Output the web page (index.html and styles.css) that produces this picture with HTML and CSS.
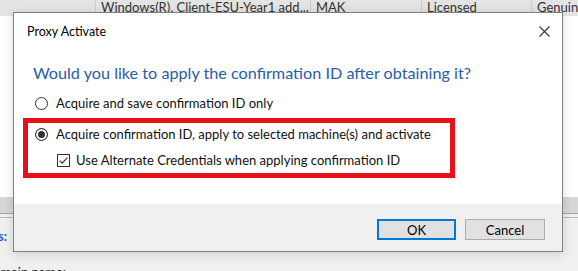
FILE: index.html
```html
<!DOCTYPE html>
<html lang="en">
<head>
    <meta charset="UTF-8">
    <title>Proxy Activate</title>
    <link rel="stylesheet" href="styles.css">
</head>
<body>
    <!-- the management console behind the dialog -->
    <div class="app">
        <div class="list-head">
            <div class="col c0"></div>
            <div class="col c1">Windows(R), Client-ESU-Year1 add...</div>
            <div class="col c2">MAK</div>
            <div class="col c3">Licensed</div>
            <div class="col c4">Genuine</div>
        </div>
        <div class="list-body"></div>
        <div class="list-sel"></div>
        <div class="list-foot"></div>
        <div class="label-clip details"><span>Details:</span></div>
        <div class="label-clip domain"><span>Domain name:</span></div>
    </div>

    <div class="dialog">
        <div class="title-bar">
            <span class="title">Proxy Activate</span>
            <svg class="close" width="11" height="11" viewBox="0 0 11 11">
                <path d="M0.5 0.5 L10.5 10.5 M10.5 0.5 L0.5 10.5" stroke="#333" stroke-width="1.1" fill="none"/>
            </svg>
        </div>
        <div class="content">
            <h2 class="heading">Would you like to apply the confirmation ID after obtaining it?</h2>
            <label class="option first">
                <input type="radio" name="mode" class="radio">
                <span>Acquire and save confirmation ID only</span>
            </label>
            <div class="highlight">
                <label class="option">
                    <input type="radio" name="mode" class="radio" checked>
                    <span>Acquire confirmation ID, apply to selected machine(s) and activate</span>
                </label>
                <label class="option sub">
                    <svg class="check" width="13" height="13" viewBox="0 0 13 13">
                        <rect x="0.5" y="0.5" width="12" height="12" fill="#fff" stroke="#333"/>
                        <path d="M2.6 6.6 L5.2 9.2 L10.4 3.6" stroke="#333" stroke-width="1.2" fill="none"/>
                    </svg>
                    <span>Use Alternate Credentials when applying confirmation ID</span>
                </label>
            </div>
        </div>
        <div class="footer">
            <button class="btn default">OK</button>
            <button class="btn">Cancel</button>
        </div>
    </div>
</body>
</html>
```

FILE: styles.css
```css
* {
    box-sizing: border-box;
}

body {
    margin: 0;
    width: 578px;
    height: 271px;
    overflow: hidden;
    position: relative;
    background-color: #f0f0f0;
    font-family: Lato, "Noto Sans", sans-serif;
    font-size: 12px;
    color: #1a1a1a;
}

/* background window */
.list-head {
    display: flex;
    height: 16px;
    background-color: #e4e4e4;
    font-size: 13px;
    line-height: 14px;
}

.col {
    border-right: 1px solid #cdcdcd;
    padding-left: 5px;
    white-space: nowrap;
    overflow: hidden;
    color: #333;
}

.c0 { width: 96px; }
.c1 { width: 215px; }
.c2 { width: 111px; }
.c3 { width: 110px; }
.c4 { flex: 1; border-right: none; }

.list-body {
    height: 181px;
    background-color: #fff;
}

.list-sel {
    height: 17px;
    background-color: #d7d7d7;
    border-bottom: 1px solid #a5a5a5;
}

.list-foot {
    height: 4px;
    border-bottom: 1px solid #b8b8b8;
}

.label-clip {
    display: flex;
    justify-content: flex-end;
    overflow: hidden;
    white-space: nowrap;
}

.details {
    width: 7px;
    margin-top: 10px;
    color: #1f5fc8;
    font-weight: bold;
    font-size: 13px;
}

.domain {
    width: 66px;
    margin-top: 20px;
    font-size: 13px;
    color: #222;
}

/* dialog */
.dialog {
    position: absolute;
    left: 13px;
    top: 12px;
    width: 550px;
    height: 240px;
    background-color: #fff;
    border: 1px solid #808080;
    box-shadow: 0 2px 10px rgba(0, 0, 0, 0.15);
    display: flex;
    flex-direction: column;
}

.title-bar {
    height: 36px;
    display: flex;
    align-items: center;
    justify-content: space-between;
    padding: 0 12px 0 13px;
    font-size: 12.5px;
    color: #000;
}

.content {
    height: 155px;
    padding: 13px 0 0 9px;
}

.heading {
    margin: 0;
    padding-left: 10px;
    font-size: 16.2px;
    line-height: 22px;
    font-weight: normal;
    color: #2a5cab;
}

.option {
    display: flex;
    align-items: center;
    height: 20px;
    gap: 8px;
    font-size: 13px;
    color: #111;
    white-space: nowrap;
}

.option.first {
    margin-top: 9px;
    padding-left: 12px;
}

.radio {
    appearance: none;
    margin: 0;
    width: 13px;
    height: 13px;
    border: 1px solid #333;
    border-radius: 50%;
    background-color: #fff;
}

.radio:checked {
    background-color: #333;
    box-shadow: inset 0 0 0 2px #fff;
}

.highlight {
    width: 432px;
    margin-top: 5px;
    border: 5px solid #e5121b;
    padding: 1px 0 3px 7px;
    display: flex;
    flex-direction: column;
    gap: 6px;
}

.option.sub {
    padding-left: 22px;
    gap: 6px;
}

.footer {
    flex: 1;
    background-color: #f0f0f0;
    display: flex;
    justify-content: flex-end;
    align-items: flex-start;
    gap: 9px;
    padding: 15px 17px 0 0;
}

.btn {
    width: 80px;
    height: 21px;
    background-color: #e1e1e1;
    border: 1px solid #adadad;
    font-family: inherit;
    font-size: 13px;
    color: #000;
    padding: 0;
}

.btn.default {
    width: 79px;
    border: 2px solid #0078d7;
}
```
